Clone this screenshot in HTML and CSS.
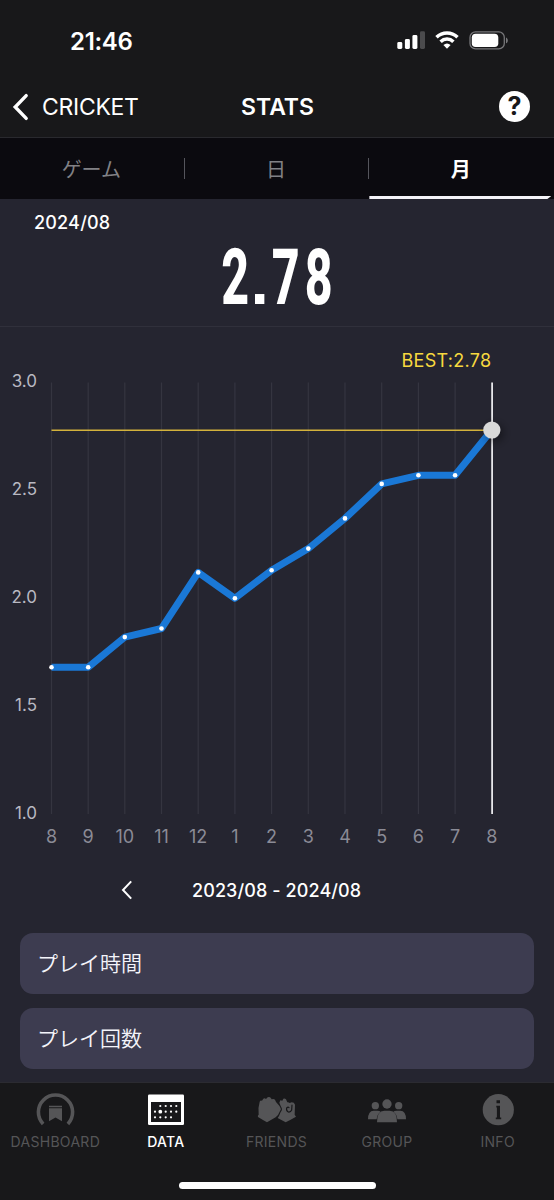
FILE: index.html
```html
<!DOCTYPE html>
<html lang="ja">
<head>
    <meta charset="UTF-8">
    <meta name="viewport" content="width=device-width, initial-scale=1.0">
    <title>STATS - CRICKET</title>
    <link rel="stylesheet" href="styles.css">
</head>

<body>
    <div class="status-bar">
        <span class="clock">21:46</span>
        <svg class="status-icons" width="114" height="22" viewBox="0 0 114 22">
            <rect x="0.3" y="13" width="5" height="7" rx="1.4" fill="#fff"/>
            <rect x="7.9" y="10" width="5" height="10" rx="1.4" fill="#fff"/>
            <rect x="15.4" y="6" width="5" height="14" rx="1.4" fill="#fff"/>
            <rect x="23" y="2.3" width="5" height="17.7" rx="1.4" fill="#4b4b4d"/>
            <g fill="none" stroke="#fff" stroke-width="3.5">
                <path d="M39.5 8.3A15.2 15.2 0 0 1 60.5 8.3"/>
                <path d="M43.6 12.7A9.2 9.2 0 0 1 56.4 12.7"/>
            </g>
            <path d="M46.4 15.9A5.6 5.6 0 0 1 53.6 15.9L50 19.8Z" fill="#fff"/>
            <rect x="73" y="2.9" width="34.3" height="17" rx="5.5" fill="none" stroke="#77777a" stroke-width="1.3"/>
            <rect x="74.8" y="4.8" width="26.5" height="13.2" rx="3.8" fill="#fff"/>
            <path d="M109 8.4C111.4 9.2 111.4 13.5 109 14.3Z" fill="#77777a"/>
        </svg>
    </div>

    <header class="nav-bar">
        <a class="back" href="#">
            <svg width="17" height="28" viewBox="0 0 17 28">
                <path d="M14.2 2.6L3.2 14L14.2 25.4" fill="none" stroke="#fff" stroke-width="3.4" stroke-linecap="round" stroke-linejoin="miter"/>
            </svg>
            <span>CRICKET</span>
        </a>
        <h1>STATS</h1>
        <button class="help" type="button">?</button>
    </header>

    <nav class="tabs">
        <a class="tab" href="#">ゲーム</a>
        <a class="tab" href="#">日</a>
        <a class="tab active" href="#">月</a>
    </nav>

    <section class="summary">
        <div class="summary-date">2024/08</div>
        <svg class="summary-value" width="554" height="102" viewBox="0 0 554 102">
            <g transform="scale(0.62 1)">
                <text x="357" y="81">2</text>
                <text x="438.5 491.5" y="81">78</text>
            </g>
            <text class="point" x="250.5" y="81">.</text>
        </svg>
    </section>

    <section class="chart">
        <svg width="554" height="530" viewBox="0 327 554 530">
            <defs>
                <filter id="knobShadow" x="-100%" y="-100%" width="300%" height="300%">
                    <feDropShadow dx="3" dy="3" stdDeviation="5" flood-color="#000" flood-opacity="0.45"/>
                </filter>
            </defs>
            <path class="grid-line" d="M51.5 382.5V814M88.2 382.5V814M124.8 382.5V814M161.5 382.5V814M198.2 382.5V814M234.9 382.5V814M271.6 382.5V814M308.3 382.5V814M345 382.5V814M381.7 382.5V814M418.4 382.5V814M455.1 382.5V814"/>
            <g class="y-labels">
                <text x="37" y="387.4">3.0</text>
                <text x="37" y="495.4">2.5</text>
                <text x="37" y="603">2.0</text>
                <text x="37" y="711">1.5</text>
                <text x="37" y="819">1.0</text>
            </g>
            <g class="x-labels">
                <text x="51.5" y="843.4">8</text>
                <text x="88.2" y="843.4">9</text>
                <text x="124.8" y="843.4">10</text>
                <text x="161.5" y="843.4">11</text>
                <text x="198.2" y="843.4">12</text>
                <text x="234.9" y="843.4">1</text>
                <text x="271.6" y="843.4">2</text>
                <text x="308.3" y="843.4">3</text>
                <text x="345" y="843.4">4</text>
                <text x="381.7" y="843.4">5</text>
                <text x="418.4" y="843.4">6</text>
                <text x="455.1" y="843.4">7</text>
                <text x="491.8" y="843.4">8</text>
            </g>
            <path class="series" d="M51.5 667.3L88.2 667.3L124.8 637.1L161.5 628.5L198.2 572.4L234.9 598.3L271.6 570.2L308.3 548.6L345 518.4L381.7 483.9L418.4 475.3L455.1 475.3L491.8 430"/>
            <path class="best-line" d="M51.5 430.2H491.8"/>
            <path class="cursor-line" d="M492.1 382.5V814"/>
            <g fill="#fff">
                <circle cx="51.5" cy="667.3" r="2.3"/>
                <circle cx="88.2" cy="667.3" r="2.3"/>
                <circle cx="124.8" cy="637.1" r="2.3"/>
                <circle cx="161.5" cy="628.5" r="2.3"/>
                <circle cx="198.2" cy="572.4" r="2.3"/>
                <circle cx="234.9" cy="598.3" r="2.3"/>
                <circle cx="271.6" cy="570.2" r="2.3"/>
                <circle cx="308.3" cy="548.6" r="2.3"/>
                <circle cx="345" cy="518.4" r="2.3"/>
                <circle cx="381.7" cy="483.9" r="2.3"/>
                <circle cx="418.4" cy="475.3" r="2.3"/>
                <circle cx="455.1" cy="475.3" r="2.3"/>
            </g>
            <circle cx="491.8" cy="430" r="8.6" fill="#d9d9d9" filter="url(#knobShadow)"/>
            <text class="best-label" x="491.5" y="366.5">BEST:2.78</text>
        </svg>
    </section>

    <div class="period">
        <svg class="period-prev" width="12" height="20" viewBox="0 0 12 20">
            <path d="M10.2 1.4L2 10L10.2 18.6" fill="none" stroke="#fff" stroke-width="2"/>
        </svg>
        <span>2023/08 - 2024/08</span>
    </div>

    <div class="items">
        <div class="item">プレイ時間</div>
        <div class="item">プレイ回数</div>
    </div>

    <footer class="tab-bar">
        <a class="menu" href="#">
            <svg width="40" height="36" viewBox="0 0 40 36">
                <path d="M8.1 31.9A17.1 17.1 0 1 1 32.9 31.9" fill="none" stroke="#555557" stroke-width="3.6"/>
                <path d="M14 13.8H27V15.2H14ZM14 16.3H27V29.3L20.5 25.6L14 29.3Z" fill="#555557"/>
            </svg>
            <span>DASHBOARD</span>
        </a>
        <a class="menu active" href="#">
            <svg width="40" height="36" viewBox="0 0 40 36">
                <rect x="2" y="2.5" width="36" height="30.5" rx="1.2" fill="#fff"/>
                <rect x="5" y="10" width="30" height="20" fill="#18181a"/>
                <g fill="#fff">
                    <circle cx="14.3" cy="14" r="1.1"/><circle cx="19.7" cy="14" r="1.1"/><circle cx="25" cy="14" r="1.1"/><circle cx="30.3" cy="14" r="1.1"/>
                    <circle cx="9" cy="19.7" r="1.1"/><circle cx="14.3" cy="19.7" r="1.9"/><circle cx="19.7" cy="19.7" r="1.1"/><circle cx="25" cy="19.7" r="1.1"/><circle cx="30.3" cy="19.7" r="1.1"/>
                    <circle cx="9" cy="25.3" r="1.1"/><circle cx="14.3" cy="25.3" r="1.1"/><circle cx="19.7" cy="25.3" r="1.1"/><circle cx="25" cy="25.3" r="1.1"/>
                </g>
            </svg>
            <span>DATA</span>
        </a>
        <a class="menu" href="#">
            <svg width="40" height="36" viewBox="109 50 120 108">
                <path fill="#555557" d="M120 79Q122 74 127 76L131 70Q135 67 139 71L144 66Q149 63 153 67L156 72Q162 69 166 73L169 80L175 87Q180 92 183 99Q185 104 181 107L175 119L168 126Q156 133 142 141Q128 133 115 125Q113 121 117 118Q114 99 120 79Z"/>
                <path fill="#555557" d="M179 82L182 75L188 76L191 70Q195 68 199 72L203 81Q207 80 210 83L216 81Q224 81 226 88L225 118L229 124Q215 132 198 141Q187 135 174 128L178 122L183 110Q190 103 184 94Z"/>
                <path fill="none" stroke="#18181a" stroke-width="3.5" stroke-linecap="round" d="M217 89L216 104Q213 111 206 110Q199 107 201 98Q205 94 208 97"/>
            </svg>
            <span>FRIENDS</span>
        </a>
        <a class="menu" href="#">
            <svg width="40" height="36" viewBox="441 50 120 108">
                <g fill="#555557">
                    <circle cx="466" cy="91" r="11"/>
                    <circle cx="536" cy="91" r="11"/>
                    <path d="M444 132Q444 106 461 106H472Q480 106 482 110Q471 117 470 132Z"/>
                    <path d="M558 132Q558 106 541 106H530Q522 106 520 110Q531 117 532 132Z"/>
                    <circle cx="501" cy="86" r="14"/>
                    <path d="M471 141Q470 107 493 106H509Q532 107 531 141Z"/>
                </g>
            </svg>
            <span>GROUP</span>
        </a>
        <a class="menu" href="#">
            <svg width="40" height="36" viewBox="0 0 40 36">
                <circle cx="20.3" cy="17.7" r="15.6" fill="#555557"/>
                <path d="M18.5 8.2H22V11.3H18.5ZM18.3 13.7H22V25.5H23.2V27.3H17.8V25.5H18.9V15.5H18.3Z" fill="#18181a"/>
            </svg>
            <span>INFO</span>
        </a>
        <div class="home-indicator"></div>
    </footer>
</body>
</html>
```
FILE: styles.css
```css
* {
    margin: 0;
    padding: 0;
    box-sizing: border-box;
}

body {
    width: 554px;
    height: 1200px;
    display: flex;
    flex-direction: column;
    overflow: hidden;
    background-color: #252530;
    color: #ffffff;
    font-family: 'Inter', 'Noto Sans CJK JP', sans-serif;
}

a {
    color: inherit;
    text-decoration: none;
}

svg {
    display: block;
    flex: none;
}

.status-bar {
    height: 76px;
    padding: 6px 43px 0 70px;
    display: flex;
    align-items: center;
    justify-content: space-between;
    background-color: #18181a;
}

.clock {
    font-size: 24px;
    font-weight: 600;
    letter-spacing: -0.3px;
}

.status-icons {
    margin-top: -2px;
}

.nav-bar {
    height: 62px;
    padding: 0 24px 0 12px;
    display: grid;
    grid-template-columns: 229px 1fr 31px;
    align-items: center;
    background-color: #18181a;
    border-bottom: 1px solid #29292e;
}

.back {
    display: flex;
    align-items: center;
    gap: 13px;
    font-size: 23px;
    font-weight: 400;
    letter-spacing: -0.3px;
}

.nav-bar h1 {
    font-size: 23px;
    font-weight: 600;
}

.help {
    width: 31px;
    height: 31px;
    border: none;
    border-radius: 50%;
    background-color: #ffffff;
    color: #18181a;
    font-family: inherit;
    font-size: 25px;
    font-weight: 700;
    line-height: 31px;
}

.tabs {
    height: 61px;
    display: flex;
    background-color: #0b0a0f;
}

.tab {
    position: relative;
    flex: 1;
    display: flex;
    align-items: center;
    justify-content: center;
    padding-right: 2px;
    color: #818185;
    font-size: 20px;
}

.tab + .tab::before {
    content: '';
    position: absolute;
    left: -1px;
    top: 20px;
    width: 1px;
    height: 21px;
    background-color: #55555c;
}

.tab.active {
    color: #ffffff;
    font-weight: 600;
}

.tab.active::after {
    content: '';
    position: absolute;
    left: 0;
    bottom: 0;
    width: 182px;
    height: 3px;
    background-color: #f4f3f8;
    clip-path: polygon(0 0, 100% 0, calc(100% - 4px) 100%, 0 100%);
}

.summary {
    height: 128px;
    border-bottom: 1px solid #30303b;
}

.summary-date {
    height: 44px;
    padding-left: 34px;
    font-size: 18px;
    font-weight: 450;
    line-height: 47px;
    letter-spacing: 0.2px;
}

.summary-value {
    margin-top: -20px;
}

.summary-value text {
    font-family: 'Roboto', sans-serif;
    font-size: 78px;
    font-weight: 800;
    fill: #ffffff;
}

.summary-value .point {
    font-family: 'Liberation Sans', sans-serif;
    font-size: 66px;
    font-weight: 700;
}

.chart {
    height: 530px;
}

.grid-line {
    stroke: #353540;
    stroke-width: 1.2;
}

.y-labels text {
    font-size: 17px;
    fill: #b9b9c2;
    text-anchor: end;
}

.x-labels text {
    font-size: 18px;
    fill: #8b8b96;
    text-anchor: middle;
}

.series {
    fill: none;
    stroke: #1a78d6;
    stroke-width: 7;
    stroke-linejoin: round;
}

.best-line {
    stroke: #d3b23c;
    stroke-width: 1.6;
}

.cursor-line {
    stroke: #f2f2f5;
    stroke-width: 1.7;
}

.best-label {
    font-size: 18px;
    letter-spacing: 0.3px;
    fill: #f7d93f;
    text-anchor: end;
}

.period {
    height: 76px;
    padding: 10px 0 0 121px;
    display: flex;
    align-items: flex-start;
    font-size: 18px;
    font-weight: 450;
    line-height: 47px;
    letter-spacing: 0.1px;
}

.period-prev {
    margin: 13px 59px 0 0;
}

.items {
    flex: 1;
    padding: 0 20px;
    display: flex;
    flex-direction: column;
    gap: 14px;
}

.item {
    height: 61px;
    padding-left: 17px;
    border-radius: 13px;
    background-color: #3d3c50;
    color: #f4f4fa;
    font-size: 21px;
    font-weight: 350;
    line-height: 61px;
}

.tab-bar {
    position: relative;
    height: 118px;
    padding: 9px 1px 0 0;
    display: flex;
    background-color: #18181a;
    border-top: 1px solid #2b2b31;
}

.menu {
    flex: 1;
    display: flex;
    flex-direction: column;
    align-items: center;
    gap: 5px;
    color: #555557;
    font-size: 14px;
    letter-spacing: 0.3px;
}

.menu.active {
    color: #ffffff;
    font-weight: 500;
}

.home-indicator {
    position: absolute;
    left: 179px;
    bottom: 11px;
    width: 197px;
    height: 7px;
    border-radius: 4px;
    background-color: #ffffff;
}
```
